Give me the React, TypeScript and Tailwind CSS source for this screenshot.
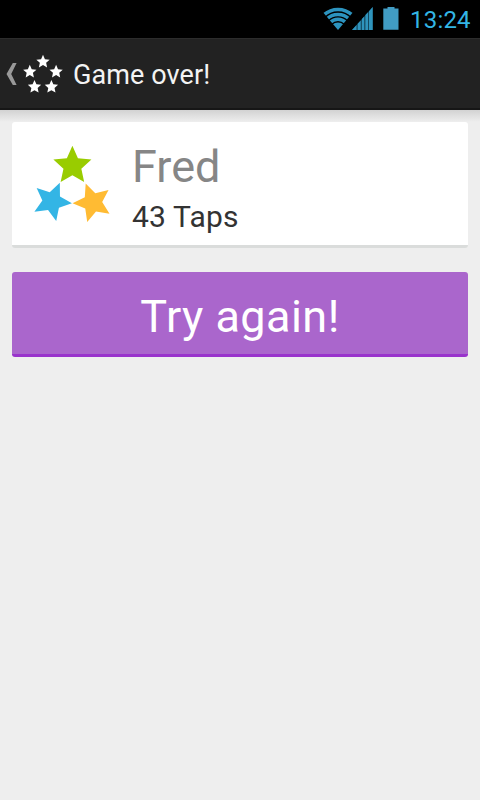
type StarProps = { cx: number; cy: number; r: number; ratio?: number; turn?: number; fill: string };

function Star({ cx, cy, r, ratio = 0.47, turn = 0, fill }: StarProps) {
  const points = Array.from({ length: 10 }, (_, i) => {
    const radius = i % 2 === 0 ? r : r * ratio;
    const angle = ((i * 36 - 90 + turn) * Math.PI) / 180;
    return `${(cx + radius * Math.cos(angle)).toFixed(2)},${(cy + radius * Math.sin(angle)).toFixed(2)}`;
  }).join(" ");
  return <polygon points={points} fill={fill} />;
}

function WifiIcon() {
  return (
    <svg className="ml-[323px] h-[23px] w-[30px] shrink-0" viewBox="0 0 30 23">
      <defs>
        <clipPath id="fan">
          <path d="M15 23 L-1.5 3.5 V-2 H31.5 V3.5 Z" />
        </clipPath>
      </defs>
      <g clipPath="url(#fan)" fill="none" stroke="#2c93be" strokeWidth="3.6">
        <circle cx="15" cy="23.5" r="21" />
        <circle cx="15" cy="23.5" r="16" />
        <circle cx="15" cy="23.5" r="11.2" />
        <circle cx="15" cy="23.5" r="4" strokeWidth="8" />
      </g>
    </svg>
  );
}

function SignalIcon() {
  return (
    <svg className="-ml-px h-[24px] w-[21px] shrink-0" viewBox="0 0 21 24">
      <path d="M0 23 L20.7 0 V23 Z" fill="#14485f" />
      <path
        d="M0 23 L4.5 18 V23 Z M5.7 23 V16.7 L8.7 13.4 V23 Z M9.9 23 V12 L12.2 9.5 V23 Z M13.4 23 V8.1 L16 5.3 V23 Z M17 23 V4.2 L20.7 0 V23 Z"
        fill="#2f94bd"
      />
    </svg>
  );
}

function BatteryIcon() {
  return (
    <svg className="ml-[10px] h-[24px] w-[16px] shrink-0" viewBox="0 0 16 24">
      <path d="M4.5 -0.5 H11.5 V1.5 H15.5 V22.7 H0.3 V1.5 H4.5 Z" fill="#419cc4" />
    </svg>
  );
}

function StatusBar() {
  return (
    <div className="flex h-[38px] items-start bg-black pt-[7px]">
      <WifiIcon />
      <SignalIcon />
      <BatteryIcon />
      <span className="ml-[11px] pt-px text-[24px] leading-[24px] tracking-[0.2px] whitespace-nowrap text-[#33b5e5]">13:24</span>
    </div>
  );
}

function ActionBar() {
  return (
    <header className="flex h-[72px] border-t border-b-2 border-t-[#2c2c2c] border-b-[#161616] bg-[#222222]">
      <svg className="h-[69px] w-[73px] shrink-0" viewBox="0 39 73 69">
        <path d="M12.8 63 H16.6 L11.2 74 L16.6 85 H12.8 L6.5 74 Z" fill="#999" />
        <Star cx={43} cy={61.8} r={7} fill="#fff" />
        <Star cx={29.8} cy={71.8} r={7} fill="#fff" />
        <Star cx={56.1} cy={71.8} r={7} fill="#fff" />
        <Star cx={34.5} cy={86.9} r={7} fill="#fff" />
        <Star cx={51.4} cy={86.9} r={7} fill="#fff" />
      </svg>
      <h1 className="text-[27px] leading-[73px] tracking-[0.1px] whitespace-nowrap text-[#f3f3f3]">Game over!</h1>
    </header>
  );
}

export default function App() {
  return (
    <div className="flex h-[800px] w-[480px] flex-col overflow-hidden bg-[#eeeeee] font-[Roboto,sans-serif]">
      <StatusBar />
      <ActionBar />
      <div className="h-[12px] bg-linear-to-b from-[#d2d2d2] to-[#eeeeee]" />
      <main className="flex flex-col gap-6 px-3">
        <section className="flex h-[126px] rounded-[3px] border-b-[3px] border-[#dadcdb] bg-white">
          <svg className="h-[123px] w-[120px] shrink-0" viewBox="12 122 120 123">
            <Star cx={72.4} cy={165.8} r={20} fill="#99cc00" />
            <Star cx={51.8} cy={201.4} r={20.2} turn={23.4} fill="#33b5e5" />
            <Star cx={92.7} cy={202.5} r={20.2} turn={51.7} fill="#ffbb33" />
          </svg>
          <div className="flex flex-col whitespace-nowrap">
            <h2 className="mt-[18px] text-[45px] leading-[53px] text-[#868686]">Fred</h2>
            <p className="mt-[6px] text-[30px] leading-[35px] tracking-[0.15px] text-[#333333]">43 Taps</p>
          </div>
        </section>
        <button className="h-[85px] rounded-[3px] border-b-[3px] border-[#9933cc] bg-[#aa66cc] pt-[8px] text-[45px] leading-[74px] tracking-[0.45px] text-white">
          Try again!
        </button>
      </main>
    </div>
  );
}
